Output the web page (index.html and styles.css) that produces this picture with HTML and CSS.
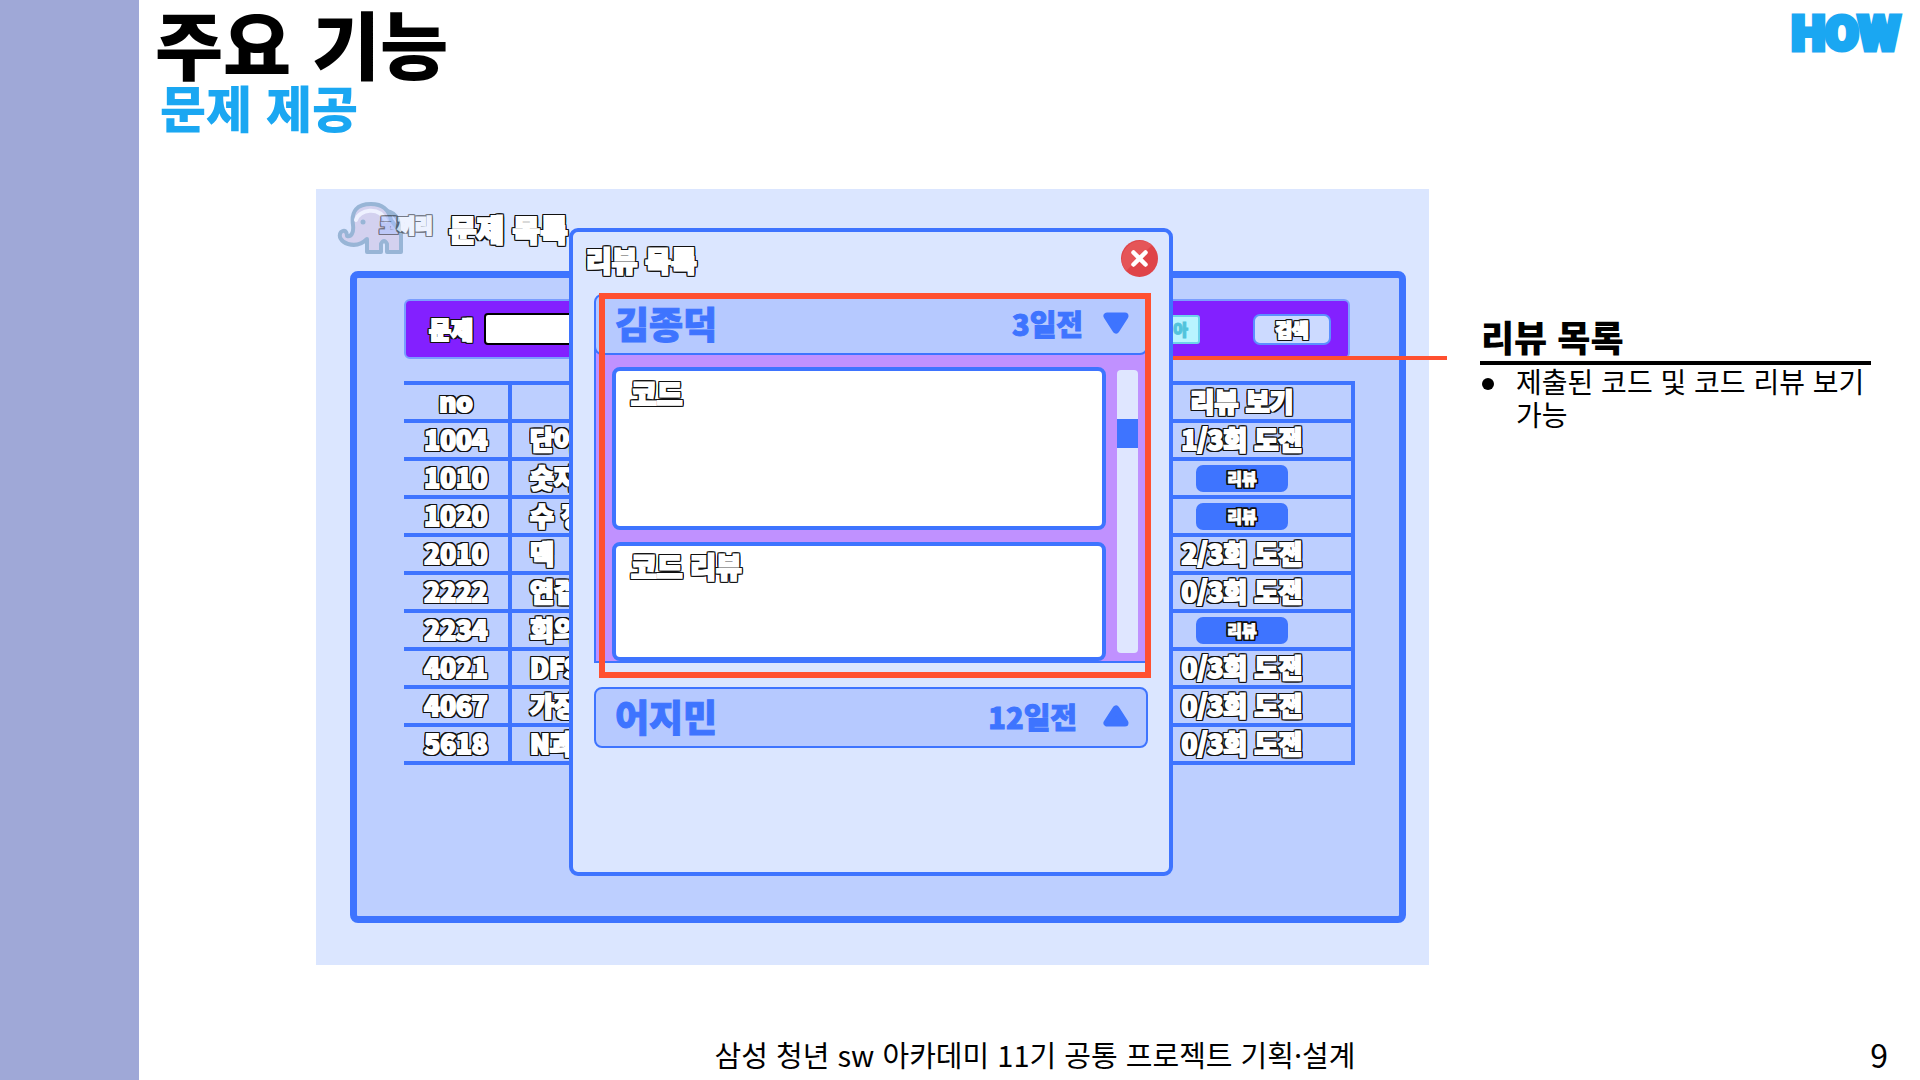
FILE: index.html
```html
<!DOCTYPE html>
<html lang="ko">
<head>
<meta charset="utf-8">
<meta name="viewport" content="width=device-width, initial-scale=1">
<title>주요 기능 - 문제 제공</title>
<link rel="stylesheet" href="styles.css">
</head>
<body>
<div class="rail"></div>
<div class="slide">
  <header class="slide-head">
    <div>
      <h1 class="title">주요 기능</h1>
      <p class="subtitle">문제 제공</p>
    </div>
    <span class="tag">HOW</span>
  </header>

  <main class="content">
    <section class="app">
      <div class="app-head">
        <div class="logo">
          <svg class="logo-art" viewBox="0 0 66 54" aria-hidden="true">
            <path d="M50 10C60 12 64 22 61 31L50 31Z" fill="#e9efff" stroke="#98b5d6" stroke-width="4"/>
            <path d="M16 24C14 10 20 3 34 3C46 3 52 9 54 19L64 32V51H50V43Q47 37 44 43V51H30V38C25 43 18 45 11 43C4 41 1 35 4 31C8 28 10 31 10 35C14 36 17 32 16 24Z" fill="#d3d1ef" stroke="#98b5d6" stroke-width="4" stroke-linejoin="round"/>
            <path d="M19 19C22 9 42 4 49 20" fill="none" stroke="#eef1ff" stroke-width="4" stroke-linecap="round"/>
            <circle cx="26" cy="21" r="2.500" fill="#98b5d6"/>
          </svg>
          <span class="logo-name outlined"><span class="logo-first">코</span>끼리</span>
        </div>
        <h2 class="app-title outlined">문제 목록</h2>
      </div>

      <div class="panel">
        <form class="search">
          <label class="search-label outlined" for="q">문제</label>
          <input class="search-input" id="q" type="text">
          <span class="tier">다이아</span>
          <button class="search-btn outlined" type="button">검색</button>
        </form>
        <table class="problems">
          <colgroup><col class="col-no"><col><col class="col-review"></colgroup>
          <thead><tr><th>no</th><th></th><th>리뷰 보기</th></tr></thead>
          <tbody>
            <tr><td>1004</td><td>단어</td><td>1/3회 도전</td></tr>
            <tr><td>1010</td><td>숫자</td><td><button class="review-btn" type="button">리뷰</button></td></tr>
            <tr><td>1020</td><td>수 정</td><td><button class="review-btn" type="button">리뷰</button></td></tr>
            <tr><td>2010</td><td>덱</td><td>2/3회 도전</td></tr>
            <tr><td>2222</td><td>연결</td><td>0/3회 도전</td></tr>
            <tr><td>2234</td><td>회의</td><td><button class="review-btn" type="button">리뷰</button></td></tr>
            <tr><td>4021</td><td>DFS</td><td>0/3회 도전</td></tr>
            <tr><td>4067</td><td>가장</td><td>0/3회 도전</td></tr>
            <tr><td>5618</td><td>N과</td><td>0/3회 도전</td></tr>
          </tbody>
        </table>
      </div>

      <div class="leader"></div>

      <div class="modal" role="dialog" aria-labelledby="modal-title">
        <div class="modal-head">
          <h3 class="modal-title outlined" id="modal-title">리뷰 목록</h3>
          <button class="close" type="button" aria-label="닫기">
            <svg viewBox="0 0 37 37" aria-hidden="true">
              <circle cx="18.500" cy="18.500" r="18.500" fill="#df4449"/>
              <path d="M5 31A18.500 18.500 0 0 1 31 5Z" fill="#e55558"/>
              <path d="M12.500 12.500L24.500 24.500M24.500 12.500L12.500 24.500" stroke="#fff" stroke-width="4.500" stroke-linecap="round"/>
            </svg>
          </button>
        </div>

        <div class="entry entry-open">
          <button class="entry-head" type="button">
            <span class="author">김종덕</span>
            <span class="age">3일전</span>
            <svg class="arrow" viewBox="0 0 26 22" aria-hidden="true"><path d="M4 4H22L13 18Z" fill="#3e74ff" stroke="#3e74ff" stroke-width="7" stroke-linejoin="round"/></svg>
          </button>
          <div class="entry-body">
            <div class="boxes">
              <div class="box box-code"><span class="outlined">코드</span></div>
              <div class="box box-review"><span class="outlined">코드 리뷰</span></div>
            </div>
            <div class="track"><div class="thumb"></div></div>
          </div>
          <div class="highlight"></div>
        </div>

        <div class="entry">
          <button class="entry-head" type="button">
            <span class="author">어지민</span>
            <span class="age age-wide">12일전</span>
            <svg class="arrow" viewBox="0 0 26 22" aria-hidden="true"><path d="M4 18H22L13 4Z" fill="#3e74ff" stroke="#3e74ff" stroke-width="7" stroke-linejoin="round"/></svg>
          </button>
        </div>
      </div>
    </section>

    <aside class="notes">
      <h2 class="notes-title">리뷰 목록</h2>
      <ul class="notes-list"><li>제출된 코드 및 코드 리뷰 보기 가능</li></ul>
    </aside>
  </main>

  <footer class="slide-foot">
    <span class="foot-text">삼성 청년 sw 아카데미 11기 공통 프로젝트 기획·설계</span>
    <span class="page-no">9</span>
  </footer>
</div>
</body>
</html>
```
FILE: styles.css
```css
:root {
  --blue: #3e74ff;
  --pale: #dbe6ff;
  --mid: #bdcfff;
  --red: #ff5030;
  --outline: 2px 0 #111, -2px 0 #111, 0 2px #111, 0 -2px #111,
    2px 1px #111, -2px 1px #111, 2px -1px #111, -2px -1px #111,
    1px 2px #111, -1px 2px #111, 1px -2px #111, -1px -2px #111,
    2px 2px #111, -2px 2px #111, 2px -2px #111, -2px -2px #111;
}
* { box-sizing: border-box; }
body {
  margin: 0;
  min-height: 100vh;
  display: flex;
  background: #fff;
  color: #000;
  font-family: "Noto Sans CJK KR", "Noto Sans", sans-serif;
}
h1, h2, h3, p, ul { margin: 0; padding: 0; }
button, input { font-family: inherit; margin: 0; }
button { padding: 0; border: 0; background: none; }

.outlined {
  color: #fff;
  font-weight: 900;
  -webkit-text-stroke: 2px #fff;
  text-shadow: var(--outline);
}

.rail { flex: 0 0 139px; background: #9fa8d7; }
.slide { flex: 1; min-width: 0; display: flex; flex-direction: column; }

.slide-head {
  display: flex;
  justify-content: space-between;
  align-items: flex-start;
  height: 189px;
  padding: 0 20px 0 16px;
}
.title { font-size: 74px; line-height: 84px; font-weight: 900; }
.subtitle {
  padding-left: 5px;
  font-size: 50px;
  line-height: 44px;
  font-weight: 900;
  color: #1aa7f2;
}
.tag {
  font-family: Roboto, sans-serif;
  font-size: 48px;
  line-height: 68px;
  font-weight: 900;
  color: #1aa7f2;
  -webkit-text-stroke: 5px #1aa7f2;
}

.content {
  flex: 1;
  display: grid;
  grid-template-columns: minmax(0, 1113fr) minmax(0, 391fr);
  gap: 51px;
  align-items: start;
  padding: 0 49px 0 177px;
}

.app { position: relative; padding: 0 23px 42px 34px; background: var(--pale); }
.app-head { display: flex; align-items: center; height: 82px; padding-bottom: 4px; }
.logo { position: relative; width: 98px; height: 54px; margin-left: -13px; }
.logo-art { display: block; width: 66px; height: 54px; }
.logo-name {
  position: absolute;
  left: 43px;
  top: 12px;
  font-size: 19px;
  line-height: 24px;
  opacity: .5;
  white-space: nowrap;
}
.logo-first { color: #a9c1ff; -webkit-text-stroke-color: #a9c1ff; }
.app-title { margin-left: 14px; font-size: 30px; line-height: 40px; white-space: nowrap; }

.panel {
  min-height: 652px;
  padding: 21px 49px 0 47px;
  border: 7px solid var(--blue);
  border-radius: 8px;
  background: var(--mid);
}
.search {
  display: flex;
  align-items: center;
  height: 60px;
  padding: 0 17px 0 23px;
  border: 2px solid #7a9dff;
  border-radius: 6px;
  background: #8320ff;
}
.search-label { width: 55px; font-size: 24px; line-height: 32px; }
.search-input {
  flex: 1;
  min-width: 0;
  height: 32px;
  border: 2px solid #000;
  border-radius: 4px;
  background: #fff;
}
.tier {
  width: 80px;
  height: 29px;
  margin: 0 53px 0 200px;
  padding-right: 10px;
  border: 2px solid #6cd2ea;
  border-radius: 3px;
  background: #b8f4ff;
  color: #52c3dc;
  font-size: 16px;
  line-height: 24px;
  font-weight: 900;
  text-align: right;
  -webkit-text-stroke: 1px #52c3dc;
}
.search-btn {
  width: 78px;
  height: 31px;
  border: 2px solid #5b90ff;
  border-radius: 7px;
  background: #ccdaff;
  font-size: 18px;
  line-height: 24px;
}

.problems {
  width: calc(100% + 5px);
  margin-top: 22px;
  border-collapse: collapse;
  table-layout: fixed;
  color: #fff;
  font-size: 26px;
  line-height: 32px;
}
.col-no { width: 106px; }
.col-review { width: 222px; }
.problems th, .problems td {
  height: 38px;
  padding: 0 0 2px;
  border: 4px solid var(--blue);
  border-left: 0;
  text-align: center;
  white-space: nowrap;
  font-weight: 900;
  -webkit-text-stroke: 2px #fff;
  text-shadow: var(--outline);
}
.problems td:nth-child(2) { padding-left: 18px; text-align: left; }
.review-btn {
  display: block;
  width: 92px;
  height: 27px;
  margin: 2px auto 0;
  border-radius: 7px;
  background: var(--blue);
  color: #fff;
  font-size: 16px;
  line-height: 25px;
  font-weight: 900;
  -webkit-text-stroke: 1px #fff;
  text-shadow: inherit;
}

/* connector from the dialog to the notes column */
.leader {
  position: absolute;
  left: calc(100% - 256px);
  right: -18px;
  top: 167px;
  height: 4px;
  background: var(--red);
}

.modal {
  position: absolute;
  left: 253px;
  right: 256px;
  top: 39px;
  bottom: 89px;
  padding: 0 21px;
  border: 4px solid var(--blue);
  border-radius: 9px;
  background: var(--pale);
}
.modal-head {
  display: flex;
  justify-content: space-between;
  align-items: center;
  height: 62px;
  padding: 0 0 9px;
  margin: 0 -10px 0 -8px;
}
.modal-title { padding-top: 2px; font-size: 28px; line-height: 36px; }
.close { width: 37px; height: 37px; }
.close svg { display: block; width: 100%; height: 100%; }

.entry-open { position: relative; margin-bottom: 24px; }
.entry-head {
  position: relative;
  display: flex;
  align-items: center;
  width: 100%;
  height: 61px;
  padding: 0 17px 4px 19px;
  border: 2px solid var(--blue);
  border-radius: 8px;
  background: #b6c9ff;
  color: var(--blue);
  font-weight: 900;
}
.author { flex: 1; font-size: 37px; line-height: 48px; text-align: left; -webkit-text-stroke: 1px var(--blue); }
.age { margin-right: 20px; font-size: 29px; line-height: 40px; -webkit-text-stroke: 1px var(--blue); }
.age-wide { margin-right: 26px; }
.arrow { width: 26px; height: 22px; }

.entry-body {
  display: flex;
  justify-content: space-between;
  margin-top: -8px;
  padding: 20px 8px 0 16px;
  border: 2px solid var(--blue);
  border-top: 0;
  background: #c091ff;
}
.boxes { flex: 1; display: grid; gap: 12px; }
.box {
  padding: 2px 15px;
  border: 4px solid var(--blue);
  border-radius: 8px;
  background: #fff;
  font-size: 28px;
  line-height: 40px;
}
.box-code { height: 163px; }
.box-review { height: 119px; padding-top: 0; }
.track { width: 21px; height: 283px; margin: 3px 0 0 11px; padding-top: 49px; border-radius: 4px; background: #dfe6ff; }
.thumb { height: 29px; background: var(--blue); }

/* call-out frame drawn over the open entry */
.highlight {
  position: absolute;
  left: 5px;
  right: -3px;
  top: -1px;
  bottom: -15px;
  border: 6px solid var(--red);
  pointer-events: none;
}

.notes { padding-top: 126px; }
.notes-title {
  padding: 0 1px 4px;
  border-bottom: 4px solid #000;
  font-size: 36px;
  line-height: 42px;
  font-weight: 900;
}
.notes-list { list-style: none; font-size: 28px; line-height: 33px; }
.notes-list li { position: relative; padding: 0 0 0 36px; word-break: keep-all; }
.notes-list li::before {
  content: "";
  position: absolute;
  left: 2px;
  top: 13px;
  width: 12px;
  height: 12px;
  border-radius: 50%;
  background: #000;
}

.slide-foot {
  display: grid;
  grid-template-columns: 1fr auto 1fr;
  align-items: center;
  height: 48px;
  padding: 0 32px 4px 43px;
  font-size: 29px;
  line-height: 40px;
}
.foot-text { grid-column: 2; }
.page-no { text-align: right; font-size: 32px; }
```
